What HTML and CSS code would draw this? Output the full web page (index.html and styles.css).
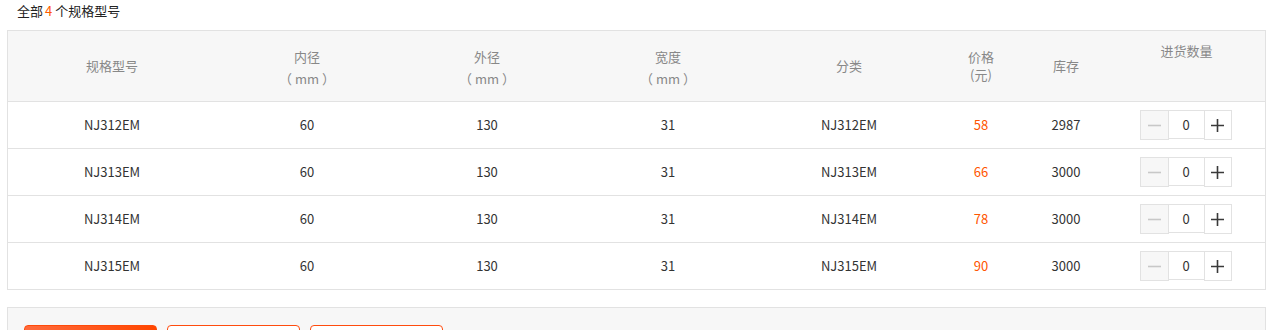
FILE: index.html
```html
<!DOCTYPE html>
<html lang="zh-CN">
<head>
<meta charset="utf-8">
<title>规格型号</title>
<link rel="stylesheet" href="styles.css">
</head>
<body>
<div class="page">
  <div class="title">全部<span class="num">4</span>个规格型号</div>

  <div class="sku-table">
    <div class="row head">
      <div class="cell">规格型号</div>
      <div class="cell two"><span>内径</span><span class="unit">（ mm ）</span></div>
      <div class="cell two"><span>外径</span><span class="unit">（ mm ）</span></div>
      <div class="cell two"><span>宽度</span><span class="unit">（ mm ）</span></div>
      <div class="cell">分类</div>
      <div class="cell tight"><span>价格</span><span>(元)</span></div>
      <div class="cell">库存</div>
      <div class="cell top">进货数量</div>
    </div>

    <div class="row">
      <div class="cell">NJ312EM</div>
      <div class="cell">60</div>
      <div class="cell">130</div>
      <div class="cell">31</div>
      <div class="cell">NJ312EM</div>
      <div class="cell price">58</div>
      <div class="cell">2987</div>
      <div class="cell">
        <div class="stepper">
          <span class="btn minus"><svg width="13" height="13" viewBox="0 0 13 13"><path d="M0 6.5H13" stroke="#c8c8c8" stroke-width="1.6"/></svg></span>
          <span class="qty">0</span>
          <span class="btn plus"><svg width="13" height="13" viewBox="0 0 13 13"><path d="M0 6.5H13M6.5 0V13" stroke="#3a3a3a" stroke-width="1.6"/></svg></span>
        </div>
      </div>
    </div>

    <div class="row">
      <div class="cell">NJ313EM</div>
      <div class="cell">60</div>
      <div class="cell">130</div>
      <div class="cell">31</div>
      <div class="cell">NJ313EM</div>
      <div class="cell price">66</div>
      <div class="cell">3000</div>
      <div class="cell">
        <div class="stepper">
          <span class="btn minus"><svg width="13" height="13" viewBox="0 0 13 13"><path d="M0 6.5H13" stroke="#c8c8c8" stroke-width="1.6"/></svg></span>
          <span class="qty">0</span>
          <span class="btn plus"><svg width="13" height="13" viewBox="0 0 13 13"><path d="M0 6.5H13M6.5 0V13" stroke="#3a3a3a" stroke-width="1.6"/></svg></span>
        </div>
      </div>
    </div>

    <div class="row">
      <div class="cell">NJ314EM</div>
      <div class="cell">60</div>
      <div class="cell">130</div>
      <div class="cell">31</div>
      <div class="cell">NJ314EM</div>
      <div class="cell price">78</div>
      <div class="cell">3000</div>
      <div class="cell">
        <div class="stepper">
          <span class="btn minus"><svg width="13" height="13" viewBox="0 0 13 13"><path d="M0 6.5H13" stroke="#c8c8c8" stroke-width="1.6"/></svg></span>
          <span class="qty">0</span>
          <span class="btn plus"><svg width="13" height="13" viewBox="0 0 13 13"><path d="M0 6.5H13M6.5 0V13" stroke="#3a3a3a" stroke-width="1.6"/></svg></span>
        </div>
      </div>
    </div>

    <div class="row last">
      <div class="cell">NJ315EM</div>
      <div class="cell">60</div>
      <div class="cell">130</div>
      <div class="cell">31</div>
      <div class="cell">NJ315EM</div>
      <div class="cell price">90</div>
      <div class="cell">3000</div>
      <div class="cell">
        <div class="stepper">
          <span class="btn minus"><svg width="13" height="13" viewBox="0 0 13 13"><path d="M0 6.5H13" stroke="#c8c8c8" stroke-width="1.6"/></svg></span>
          <span class="qty">0</span>
          <span class="btn plus"><svg width="13" height="13" viewBox="0 0 13 13"><path d="M0 6.5H13M6.5 0V13" stroke="#3a3a3a" stroke-width="1.6"/></svg></span>
        </div>
      </div>
    </div>
  </div>

  <div class="action-bar">
    <button class="act primary" type="button"></button>
    <button class="act outline" type="button"></button>
    <button class="act outline" type="button"></button>
  </div>
</div>
</body>
</html>
```

FILE: styles.css
```css
html, body {
  margin: 0;
  padding: 0;
  background: #fff;
}

body {
  font-family: "Noto Sans CJK SC", "Liberation Sans", sans-serif;
  font-size: 13px;
  color: #333;
}

.page {
  padding: 0 17px 0 7px;
}

.title {
  height: 22px;
  line-height: 22px;
  padding-left: 10px;
  margin-bottom: 8px;
  color: #222;
}

.title .num {
  color: #ff5a00;
  margin: 0 3px 0 2px;
}

.sku-table {
  border: 1px solid #e2e2e2;
}

.row {
  display: grid;
  grid-template-columns: 208px 182px 178px 184px 178px 86px 84px 1fr;
  height: 46px;
  border-bottom: 1px solid #e2e2e2;
}

.row.last {
  border-bottom: none;
}

.row.head {
  height: 70px;
  background: #f7f7f7;
  color: #888;
}

.cell {
  display: flex;
  flex-direction: column;
  align-items: center;
  justify-content: center;
  line-height: 18px;
  white-space: pre;
}

.cell.two {
  line-height: 22px;
  padding-top: 3px;
}

.cell .unit {
  letter-spacing: 0;
}

.cell.tight {
  line-height: 18px;
}

.cell.top {
  justify-content: flex-start;
  padding-top: 11px;
}

.cell.price {
  color: #ff5500;
}

.stepper {
  display: flex;
  align-items: flex-start;
  margin-left: -2px;
}

.btn {
  width: 27px;
  height: 28px;
  border: 1px solid #e2e2e2;
  display: flex;
  align-items: center;
  justify-content: center;
}

.btn.minus {
  background: #f7f7f7;
}

.btn.plus {
  background: #fff;
  width: 26px;
}

.qty {
  width: 35px;
  height: 27px;
  border: 1px solid #e2e2e2;
  border-left: none;
  border-right: none;
  display: flex;
  align-items: center;
  justify-content: center;
  color: #333;
}

.action-bar {
  margin-top: 17px;
  border: 1px solid #e2e2e2;
  background: #f7f7f7;
  padding: 17px 16px 20px;
  display: flex;
  gap: 10px;
}

.act {
  width: 133px;
  height: 40px;
  border-radius: 4px;
  border: 1px solid #ff4c0f;
  background: #fff;
  padding: 0;
  font: inherit;
}

.act.primary {
  background: linear-gradient(90deg, #ff6b3d, #ff4600);
  border-color: #ff4a0a;
}
```
